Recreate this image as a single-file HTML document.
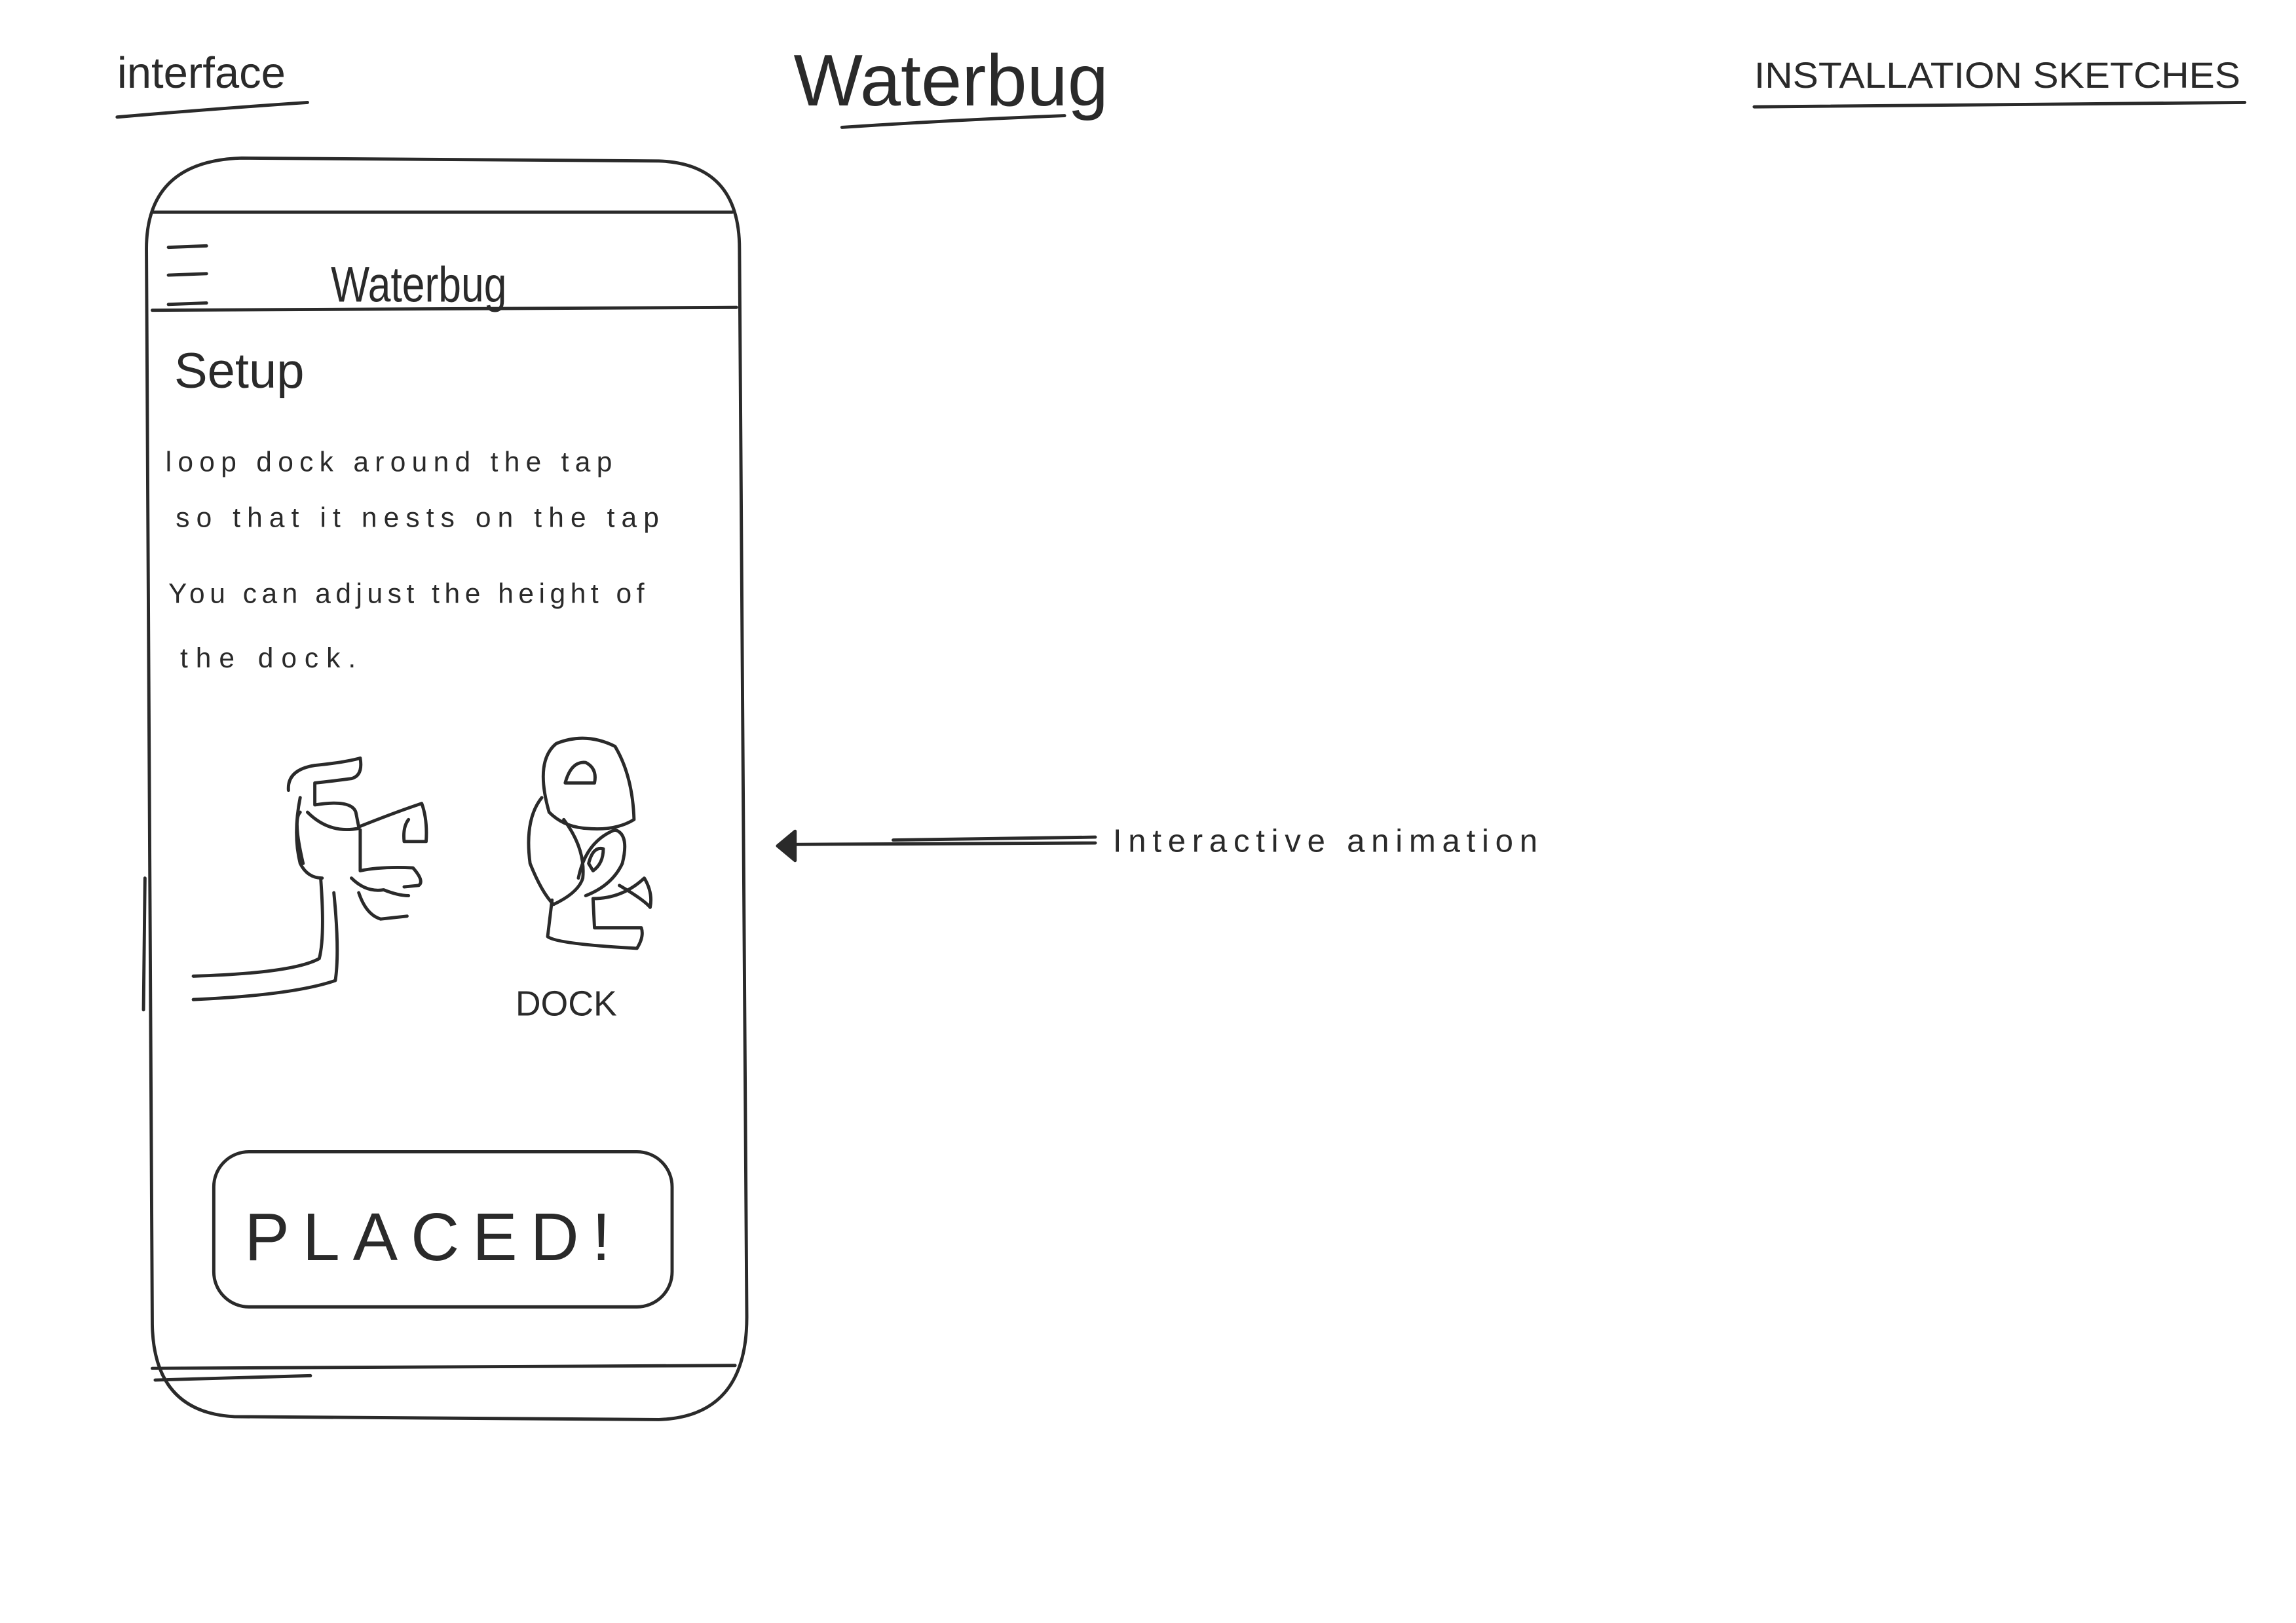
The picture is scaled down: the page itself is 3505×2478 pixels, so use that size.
<!DOCTYPE html>
<html><head><meta charset="utf-8"><style>
html,body{margin:0;padding:0;background:#fff;}
svg{display:block;}
text{font-family:"Liberation Sans",sans-serif;fill:#2a2a2a;}
</style></head><body>
<svg width="3505" height="2478" viewBox="0 0 1568 1109" preserveAspectRatio="none" xmlns="http://www.w3.org/2000/svg">
<rect width="1568" height="1109" fill="#fff"/>
<g fill="none" stroke="#2a2a2a" stroke-width="2.2" stroke-linecap="round" stroke-linejoin="round">
<!-- headings underlines -->
<path d="M80 80 Q150 74 210 70"/>
<path d="M575 87 Q650 82 727 79"/>
<path d="M1198 73 Q1360 72 1533 70"/>
<!-- phone -->
<path d="M165 108 L450 110 Q505 112 505 170 L510 900 Q510 968 450 970 L160 968 Q105 965 104 905 L100 170 Q100 110 165 108 Z"/>
<path d="M104 145 L500 145"/>
<path d="M104 212 L503 210"/>
<path d="M104 935 L502 933"/>
<path d="M106 943 L212 940"/>
<path d="M99 600 L98 690"/>
<!-- hamburger -->
<path d="M115 169 L141 168"/><path d="M115 188 L141 187"/><path d="M115 208 L141 207"/>
<!-- button -->
<rect x="146" y="787" width="313" height="106" rx="24"/>
<!-- tap -->
<path d="M197 540 Q196 526 215 523 Q235 521 246 518 Q248 530 240 532 Q225 534 215 535 L215 550 Q240 546 243 555 L245 565 Q270 555 288 549 Q292 560 291 575 L276 575 Q275 565 279 560"/>
<path d="M205 545 Q200 570 205 590 Q210 600 220 600"/>
<path d="M205 555 Q200 560 207 590"/>
<path d="M210 555 Q225 570 245 566"/>
<path d="M246 567 L246 595 Q260 592 282 593 Q290 602 286 605 L276 606"/>
<path d="M240 600 Q250 610 262 608 Q272 612 279 612"/>
<path d="M245 610 Q250 625 260 628 L278 626"/>
<path d="M219 600 Q222 640 218 655 Q200 665 132 667"/>
<path d="M228 610 Q232 650 229 670 Q200 680 132 683"/>
<!-- dock -->
<path d="M375 555 Q365 520 380 508 Q400 500 420 510 Q432 530 433 560 Q420 568 400 566 Q385 565 375 555 Z"/>
<path d="M386 535 Q390 520 400 521 Q408 525 406 535 Z"/>
<path d="M370 545 Q358 560 362 590 Q370 610 378 618 Q395 610 398 600 Q400 580 385 560"/>
<path d="M395 600 Q400 575 420 567 Q430 570 425 590 Q418 605 400 612"/>
<path d="M402 590 Q405 578 412 580 Q412 590 405 595 Z"/>
<path d="M377 615 L374 640 Q380 645 435 648 Q440 640 438 634 L406 634 L405 614 Q425 614 440 600 Q446 610 444 620 Q440 615 423 605"/>
<!-- arrow -->
<path d="M540 577 L748 576"/>
<path d="M610 574 L748 572"/>
<path d="M543 568 L531 578 L543 588 Z" fill="#2a2a2a"/>
</g>
<text x="80" y="60" font-size="30">interface</text>
<text x="542" y="72" font-size="50">Waterbug</text>
<text x="1198" y="60" font-size="25" textLength="332" lengthAdjust="spacingAndGlyphs">INSTALLATION SKETCHES</text>
<text x="226" y="206" font-size="34" textLength="120" lengthAdjust="spacingAndGlyphs">Waterbug</text>
<text x="119" y="265" font-size="34">Setup</text>
<text x="113" y="322" font-size="19" textLength="305" lengthAdjust="spacing">loop dock around the tap</text>
<text x="120" y="360" font-size="19" textLength="330" lengthAdjust="spacing">so that it nests on the tap</text>
<text x="115" y="412" font-size="19" textLength="325" lengthAdjust="spacing">You can adjust the height of</text>
<text x="123" y="456" font-size="19" textLength="120" lengthAdjust="spacing">the dock.</text>
<text x="352" y="694" font-size="24">DOCK</text>
<text x="167" y="861" font-size="46" textLength="250" lengthAdjust="spacing">PLACED!</text>
<text x="760" y="582" font-size="22" textLength="290" lengthAdjust="spacing">Interactive animation</text>
</svg>
</body></html>
